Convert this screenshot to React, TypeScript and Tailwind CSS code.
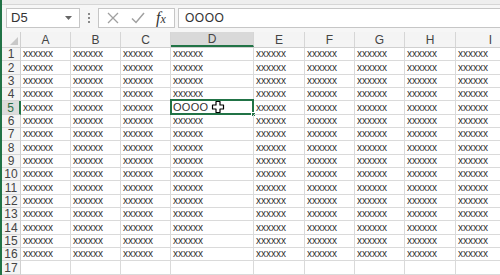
import React from "react";

const cols = [
  { l: "A", w: "w-[50px]" },
  { l: "B", w: "w-[50px]" },
  { l: "C", w: "w-[50px]" },
  { l: "D", w: "w-[83px]" },
  { l: "E", w: "w-[51px]" },
  { l: "F", w: "w-[50px]" },
  { l: "G", w: "w-[50px]" },
  { l: "H", w: "w-[51px]" },
  { l: "I", w: "w-[70px]" },
];

const rows = Array.from({ length: 17 }, (_, i) => i + 1);

function FatCross() {
  return (
    <svg width="14" height="14" viewBox="0 0 14 14" className="absolute left-[40px] top-[-1px]">
      <path
        d="M5 1.5h4v3.5h3.5v4H9v3.5H5V9H1.5V5H5z"
        fill="#fff"
        stroke="#000"
        strokeWidth="1.2"
        strokeLinejoin="round"
      />
    </svg>
  );
}

function FormulaBar() {
  return (
    <div className="h-[32px] shrink-0 bg-[#f6f6f6] flex flex-col">
      <div className="h-[5px] bg-[#eeeeee] border-b border-[#d6d6d6]" />
      <div className="flex items-center mt-[3px] h-[20px]">
        <div className="ml-[4px] w-[74px] h-full bg-white border border-[#c6c6c6] flex items-center justify-between px-[4px]">
          <span className="text-[13px] text-[#333]">D5</span>
          <svg width="7" height="4" viewBox="0 0 7 4" className="mr-[3px]">
            <path d="M0 0h7L3.5 4z" fill="#666" />
          </svg>
        </div>
        <div className="w-[18px] flex flex-col items-center gap-[2px]">
          <span className="w-[2px] h-[2px] bg-[#8a8a8a]" />
          <span className="w-[2px] h-[2px] bg-[#8a8a8a]" />
          <span className="w-[2px] h-[2px] bg-[#8a8a8a]" />
        </div>
        <div className="w-[77px] h-full bg-white border border-[#c6c6c6] flex items-center">
          <svg width="12" height="12" viewBox="0 0 12 12" className="ml-[8px]">
            <path d="M1 1l10 10M11 1L1 11" stroke="#a0a0a0" strokeWidth="1.3" />
          </svg>
          <svg width="14" height="12" viewBox="0 0 14 12" className="ml-[12px]">
            <path d="M1 6.5l4 4L13 1" stroke="#a0a0a0" strokeWidth="1.5" fill="none" />
          </svg>
          <span className="ml-[11px] font-['Liberation_Serif',serif] italic text-[16px] text-[#333] leading-none">
            f<span className="text-[12px]">x</span>
          </span>
        </div>
        <div className="ml-[3px] flex-1 h-full bg-white border border-[#c6c6c6] border-r-0 flex items-center pl-[6px]">
          <span className="text-[12px] text-[#333] tracking-[0.5px]">OOOO</span>
        </div>
      </div>
    </div>
  );
}

export default function App() {
  return (
    <div className="w-[500px] h-[275px] overflow-hidden bg-white border-l-2 border-[#217346] flex flex-col font-['Liberation_Sans',Arial,sans-serif]">
      <FormulaBar />
      {/* column headers */}
      <div className="flex shrink-0 h-[16px] bg-[#f4f4f4] border-b border-[#d0d0d0]">
        <div className="w-[19px] shrink-0 border-r border-[#d0d0d0] relative">
          <svg width="8" height="8" viewBox="0 0 8 8" className="absolute right-[2px] bottom-[2px]">
            <path d="M8 0v8H0z" fill="#c8c8c8" />
          </svg>
        </div>
        {cols.map((c) => (
          <div
            key={c.l}
            className={`${c.w} shrink-0 flex items-center justify-center text-[12px] text-[#444] border-r border-[#d6d6d6] ${
              c.l === "D" ? "bg-[#d9d9d9] border-b-2 border-b-[#217346]" : ""
            }`}
          >
            {c.l}
          </div>
        ))}
      </div>
      <div className="flex-1 flex flex-col overflow-hidden">
        {rows.map((r, i) => (
          <div key={r} className={`flex shrink-0 ${i % 3 === 1 ? "h-[14px]" : "h-[13px]"}`}>
            <div
              className={`w-[19px] shrink-0 flex items-center justify-center text-[12px] leading-none border-b border-[#d6d6d6] ${
                r === 5
                  ? "bg-[#dcdcdc] text-[#2d6a45] border-r-2 border-r-[#217346]"
                  : "bg-[#f4f4f4] text-[#444] border-r border-r-[#d0d0d0]"
              }`}
            >
              {r}
            </div>
            {cols.map((c) => {
              const active = r === 5 && c.l === "D";
              return (
                <div
                  key={c.l}
                  className={`${c.w} shrink-0 relative flex items-center pl-[2px] text-[#333] border-r border-b border-[#dadada] leading-none ${
                    active ? "text-[11px] tracking-[0.3px]" : "text-[10px]"
                  }`}
                >
                  {r < 17 && (active ? "OOOO" : "xxxxxx")}
                  {active && (
                    <>
                      <div className="absolute -left-[1px] -top-[2px] right-[-1px] bottom-[-1px] border-2 border-[#217346]" />
                      <div className="absolute right-[-3px] bottom-[-3px] w-[5px] h-[5px] bg-[#217346] border border-white" />
                      <FatCross />
                    </>
                  )}
                </div>
              );
            })}
          </div>
        ))}
      </div>
    </div>
  );
}
